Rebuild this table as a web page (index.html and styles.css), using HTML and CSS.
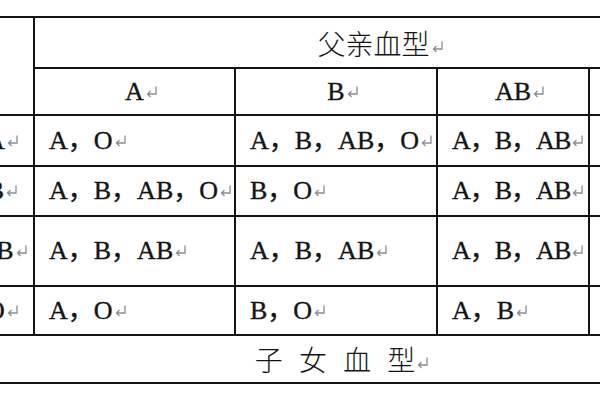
FILE: index.html
```html
<!DOCTYPE html>
<html lang="zh">
<head>
<meta charset="utf-8">
<link rel="stylesheet" href="styles.css">
</head>
<body>
<div class="sheet">
<table class="bt">
  <colgroup>
    <col class="c0"><col class="c1"><col class="c2"><col class="c3"><col class="c4">
  </colgroup>
  <tr class="h1">
    <td rowspan="2" class="ctr"></td>
    <td colspan="4" class="ctr zh">父亲血型<svg class="pm" viewBox="0 0 13 13"><path d="M11 1.5V9H2.5M5.5 6L2.5 9L5.5 12"/></svg></td>
  </tr>
  <tr class="h2">
    <td class="ctr">A<svg class="pm" viewBox="0 0 13 13"><path d="M11 1.5V9H2.5M5.5 6L2.5 9L5.5 12"/></svg></td>
    <td class="ctr">B<svg class="pm" viewBox="0 0 13 13"><path d="M11 1.5V9H2.5M5.5 6L2.5 9L5.5 12"/></svg></td>
    <td class="ctr">AB<svg class="pm" viewBox="0 0 13 13"><path d="M11 1.5V9H2.5M5.5 6L2.5 9L5.5 12"/></svg></td>
    <td class="ctr">O<svg class="pm" viewBox="0 0 13 13"><path d="M11 1.5V9H2.5M5.5 6L2.5 9L5.5 12"/></svg></td>
  </tr>
  <tr class="h3">
    <td class="ctr">A<svg class="pm" viewBox="0 0 13 13"><path d="M11 1.5V9H2.5M5.5 6L2.5 9L5.5 12"/></svg></td>
    <td>A，O<svg class="pm" viewBox="0 0 13 13"><path d="M11 1.5V9H2.5M5.5 6L2.5 9L5.5 12"/></svg></td>
    <td>A，B，AB，O<svg class="pm" viewBox="0 0 13 13"><path d="M11 1.5V9H2.5M5.5 6L2.5 9L5.5 12"/></svg></td>
    <td class="tight">A，B，AB<svg class="pm" viewBox="0 0 13 13"><path d="M11 1.5V9H2.5M5.5 6L2.5 9L5.5 12"/></svg></td>
    <td>A，O<svg class="pm" viewBox="0 0 13 13"><path d="M11 1.5V9H2.5M5.5 6L2.5 9L5.5 12"/></svg></td>
  </tr>
  <tr class="h4">
    <td class="ctr">B<svg class="pm" viewBox="0 0 13 13"><path d="M11 1.5V9H2.5M5.5 6L2.5 9L5.5 12"/></svg></td>
    <td>A，B，AB，O<svg class="pm" viewBox="0 0 13 13"><path d="M11 1.5V9H2.5M5.5 6L2.5 9L5.5 12"/></svg></td>
    <td>B，O<svg class="pm" viewBox="0 0 13 13"><path d="M11 1.5V9H2.5M5.5 6L2.5 9L5.5 12"/></svg></td>
    <td class="tight">A，B，AB<svg class="pm" viewBox="0 0 13 13"><path d="M11 1.5V9H2.5M5.5 6L2.5 9L5.5 12"/></svg></td>
    <td>B，O<svg class="pm" viewBox="0 0 13 13"><path d="M11 1.5V9H2.5M5.5 6L2.5 9L5.5 12"/></svg></td>
  </tr>
  <tr class="h5">
    <td class="ctr">AB<svg class="pm" viewBox="0 0 13 13"><path d="M11 1.5V9H2.5M5.5 6L2.5 9L5.5 12"/></svg></td>
    <td>A，B，AB<svg class="pm" viewBox="0 0 13 13"><path d="M11 1.5V9H2.5M5.5 6L2.5 9L5.5 12"/></svg></td>
    <td>A，B，AB<svg class="pm" viewBox="0 0 13 13"><path d="M11 1.5V9H2.5M5.5 6L2.5 9L5.5 12"/></svg></td>
    <td class="tight">A，B，AB<svg class="pm" viewBox="0 0 13 13"><path d="M11 1.5V9H2.5M5.5 6L2.5 9L5.5 12"/></svg></td>
    <td>A，B<svg class="pm" viewBox="0 0 13 13"><path d="M11 1.5V9H2.5M5.5 6L2.5 9L5.5 12"/></svg></td>
  </tr>
  <tr class="h6">
    <td class="ctr">O<svg class="pm" viewBox="0 0 13 13"><path d="M11 1.5V9H2.5M5.5 6L2.5 9L5.5 12"/></svg></td>
    <td>A，O<svg class="pm" viewBox="0 0 13 13"><path d="M11 1.5V9H2.5M5.5 6L2.5 9L5.5 12"/></svg></td>
    <td>B，O<svg class="pm" viewBox="0 0 13 13"><path d="M11 1.5V9H2.5M5.5 6L2.5 9L5.5 12"/></svg></td>
    <td>A，B<svg class="pm" viewBox="0 0 13 13"><path d="M11 1.5V9H2.5M5.5 6L2.5 9L5.5 12"/></svg></td>
    <td>O<svg class="pm" viewBox="0 0 13 13"><path d="M11 1.5V9H2.5M5.5 6L2.5 9L5.5 12"/></svg></td>
  </tr>
  <tr class="h7">
    <td colspan="5" class="ctr zh spaced">子 女 血 型<svg class="pm" viewBox="0 0 13 13"><path d="M11 1.5V9H2.5M5.5 6L2.5 9L5.5 12"/></svg></td>
  </tr>
</table>
</div>
</body>
</html>
```

FILE: styles.css
```css
html, body {
  margin: 0;
  background: #ffffff;
  overflow: hidden;
}

body {
  font-family: "Liberation Serif", "Noto Sans CJK SC", serif;
  font-size: 26px;
  color: #141414;
}

.sheet {
  padding-top: 16px;
}

.bt {
  border-collapse: collapse;
  table-layout: fixed;
  width: 756px;
  margin-left: -44px;
}

.c0 { width: 77px; }
.c1 { width: 201px; }
.c2 { width: 202px; }
.c3 { width: 152px; }
.c4 { width: 124px; }

.bt td {
  border: 2px solid #141414;
  padding: 0 0 0 14px;
  vertical-align: middle;
  white-space: nowrap;
  overflow: hidden;
  line-height: 1;
  -webkit-text-stroke: 0.35px #141414;
}

.bt td.ctr {
  text-align: center;
  padding: 0;
}

.bt td.tight {
  letter-spacing: -1px;
}

.bt td.zh {
  font-family: "Noto Sans CJK SC", sans-serif;
  font-size: 28px;
  font-weight: 300;
  -webkit-text-stroke: 0;
}

.spaced {
  word-spacing: 10px;
}

.h1 { height: 51px; }
.h2 { height: 47px; }
.h3 { height: 51px; }
.h4 { height: 50px; }
.h5 { height: 70px; }
.h6 { height: 49px; }
.h7 { height: 48px; }

.pm {
  width: 13px;
  height: 13px;
  margin-left: 1px;
  margin-right: -14px;
  vertical-align: 2px;
  fill: none;
  stroke: #8a8d96;
  stroke-width: 1.3;
}
```
